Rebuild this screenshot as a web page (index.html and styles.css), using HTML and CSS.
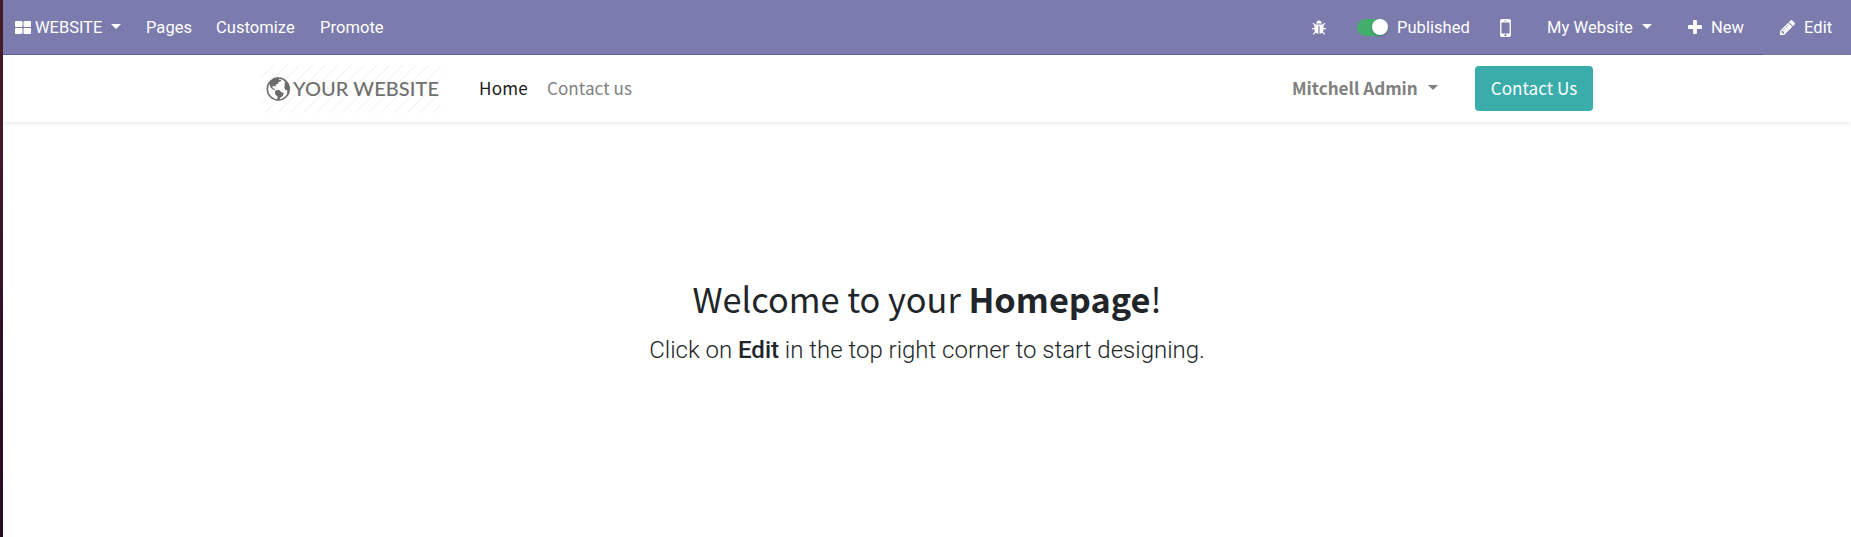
FILE: index.html
```html
<!DOCTYPE html>
<html lang="en">
<head>
<meta charset="utf-8">
<title>Home | My Website</title>
<link rel="stylesheet" href="styles.css">
</head>
<body>
<nav class="topbar">
  <a class="brand"><svg class="grid-icon" viewBox="0 0 16 13"><rect width="7.5" height="6" rx="1"/><rect x="8.5" width="7.5" height="6" rx="1"/><rect y="7" width="7.5" height="6" rx="1"/><rect x="8.5" y="7" width="7.5" height="6" rx="1"/></svg>WEBSITE<i class="caret"></i></a>
  <a class="pages">Pages</a>
  <a class="customize">Customize</a>
  <a class="promote">Promote</a>
  <div class="tools">
    <a class="debug"><svg class="fa" viewBox="0 0 1792 1792"><path d="M1696 960q0 26-19 45t-45 19h-224q0 171-67 290l208 209q19 19 19 45t-19 45q-18 19-45 19t-45-19l-198-197q-5 5-15 13t-42 28.5-65 36.5-82 29-97 13v-896h-128v896q-51 0-101.5-13.5t-87-33-66-39-43.500-32.500l-15-14-183 207q-20 21-48 21-24 0-43-16-19-18-20.500-44.500t15.500-46.500l202-227q-58-114-58-274h-224q-26 0-45-19t-19-45 19-45 45-19h224v-294l-173-173q-19-19-19-45t19-45 45-19 45 19l173 173h844l173-173q19-19 45-19t45 19 19 45-19 45l-173 173v294h224q26 0 45 19t19 45zm-480-576h-640q0-133 93.500-226.500t226.500-93.500 226.500 93.500 93.500 226.500z"/></svg></a>
    <a class="publish"><span class="switch"><span class="knob"></span></span>Published</a>
    <a class="mobile"><svg class="phone" viewBox="512 256 768 1280"><path d="M976 1408q0-33-23.500-56.500t-56.500-23.500-56.500 23.500-23.500 56.500 23.500 56.500 56.500 23.500 56.500-23.500 23.500-56.500zm208-160v-704q0-13-9.500-22.500t-22.500-9.500h-512q-13 0-22.500 9.500t-9.500 22.500v704q0 13 9.500 22.500t22.500 9.500h512q13 0 22.500-9.500t9.500-22.500zm-192-848q0-16-16-16h-160q-16 0-16 16t16 16h160q16 0 16-16zm288-16v1024q0 52-38 90t-90 38h-512q-52 0-90-38t-38-90v-1024q0-52 38-90t90-38h512q52 0 90 38t38 90z"/></svg></a>
    <a class="site">My Website<i class="caret"></i></a>
    <a class="new"><svg class="plus" viewBox="192 128 1408 1408"><path d="M1600 736v192q0 40-28 68t-68 28h-416v416q0 40-28 68t-68 28h-192q-40 0-68-28t-28-68v-416h-416q-40 0-68-28t-28-68v-192q0-40 28-68t68-28h416v-416q0-40 28-68t68-28h192q40 0 68 28t28 68v416h416q40 0 68 28t28 68z"/></svg>New</a>
    <a class="edit"><svg class="pencil" viewBox="128 149 1515 1515"><path d="M491 1536l91-91-235-235-91 91v107h128v128h107zm523-928q0-22-22-22-10 0-17 7l-542 542q-7 7-7 17 0 22 22 22 10 0 17-7l542-542q7-7 7-17zm-54-192l416 416-832 832h-416v-416zm683 96q0 53-37 90l-166 166-416-416 166-165q36-38 90-38 53 0 91 38l235 234q37 39 37 91z"/></svg>Edit</a>
  </div>
</nav>
<header class="header">
  <svg class="logo" viewBox="0 0 180 48">
    <defs>
      <pattern id="hatch" width="12.900" height="12.900" patternUnits="userSpaceOnUse"><path d="M-1 13.900 13.900 -1M-1 1 1 -1M11.900 13.900 13.900 11.900" stroke="#e8e8e8" stroke-width=".8"/></pattern>
    </defs>
    <rect width="180" height="48" fill="url(#hatch)"/>
    <circle cx="17.300" cy="24" r="11" fill="#fff" stroke="#6c6c6c" stroke-width="1.500"/>
    <path fill="#6c6c6c" d="M8.200 18.500Q11 13.500 16.500 12.600L18.600 13.400 17.800 15 19.600 14.800 20.300 16.300 18 16.800 16.800 18.700 14.800 19.800 14.500 21.700 12.600 20.700 11.200 22 12.600 23.700 14.300 24.300 13.500 25.200 10.800 23.800 9.300 21.800ZM14.800 25.200 18.300 25.100 20 27 22.800 28 21.800 31 19.500 32.600 17.800 35.200 16.300 35 16.500 31.500 14.300 29.600 13.900 27.200ZM23.600 14.500Q28 18 28.500 23.500 28.300 28 26.600 29.800L26 27.500 26.500 25.600 24.500 24.900 23.200 22.500 24 20 23.200 18.700 24.500 17.500 23.300 16.200Z"/>
    <text class="logo-text" x="32" y="31" textLength="146">YOUR WEBSITE</text>
  </svg>
  <a class="home">Home</a>
  <a class="contact">Contact us</a>
  <a class="user">Mitchell Admin<i class="caret"></i></a>
  <a class="button">Contact Us</a>
</header>
<main class="welcome">
  <h1 class="title">Welcome to your <b>Homepage</b>!</h1>
  <p class="lead">Click on <b>Edit</b> in the top right corner to start designing.</p>
</main>
</body>
</html>
```
FILE: styles.css
```css
* { box-sizing: border-box; }
body { margin: 0; height: 537px; overflow: hidden; padding-left: 3px; background: linear-gradient(#421d22, #451a2b 25%, #2e1029 65%, #270b26) 0 0 / 3px 537px no-repeat #fff; font-family: Roboto, sans-serif; color: #212529; }
svg { flex: none; fill: currentColor; }
.topbar { display: flex; align-items: center; height: 55px; background: linear-gradient(#5f5e97, #5f5e97) 0 100% / 1760px 1px no-repeat #7c7bad; color: #fff; font-size: 16.500px; letter-spacing: .05px; white-space: nowrap; }
.topbar a { display: flex; align-items: center; height: 54px; }
.caret { width: 0; height: 0; border: 5px solid transparent; border-top-color: currentColor; border-bottom: 0; }
.topbar .brand { padding-left: 12px; width: 143px; letter-spacing: -.05px; }
.grid-icon { width: 16px; height: 13px; margin-right: 4px; }
.topbar .caret { margin: 0 0 2px 9px; }
.pages { width: 70px; }
.customize { width: 104px; }
.tools { display: flex; margin-left: auto; }
.debug { width: 46px; }
.fa { width: 16px; height: 16px; }
.publish { width: 143px; }
.switch { display: flex; justify-content: flex-end; width: 31px; height: 17px; margin-right: 9px; border-radius: 9px; background: #43ad6b; }
.knob { width: 16px; height: 16px; border-radius: 50%; background: #fff; box-shadow: 0 1px 2px rgba(0,0,0,.25); }
.mobile { width: 47px; }
.phone { width: 11px; height: 18px; }
.site { width: 141px; }
.new { width: 92px; }
.plus { width: 14px; height: 14px; margin: 0 9px 2px 0; }
.edit { width: 71px; }
.pencil { width: 15px; height: 15px; margin-right: 9px; }
.header { display: flex; align-items: center; height: 67px; padding: 0 258px; box-shadow: 0 2px 4px rgba(0,0,0,.075); font: 17.100px/30px "Noto Sans CJK SC", sans-serif; white-space: nowrap; color: #808080; }
.header a { padding-bottom: 2px; }
.logo { width: 180px; height: 48px; }
.logo-text { font: 500 20px Lato, sans-serif; fill: #707070; }
.home { margin-left: 38px; width: 68px; color: #1a1a1a; letter-spacing: .2px; }
.contact { letter-spacing: .05px; }
.user { display: flex; align-items: center; margin-left: auto; width: 183px; font-weight: 700; }
.user .caret { margin-left: 10px; }
.button { display: flex; align-items: center; justify-content: center; width: 118px; height: 45px; border-radius: 4px; background: #3aadaa; color: #fff; }
.welcome { padding-top: 151px; text-align: center; white-space: nowrap; }
.title { margin: 0; font: 400 34.300px/50px "Noto Sans CJK SC", sans-serif; }
.title b { font-weight: 700; }
.lead { margin: 9px 0 0; font-size: 24px; line-height: 36px; font-weight: 300; }
.lead b { font-weight: 500; }
```
